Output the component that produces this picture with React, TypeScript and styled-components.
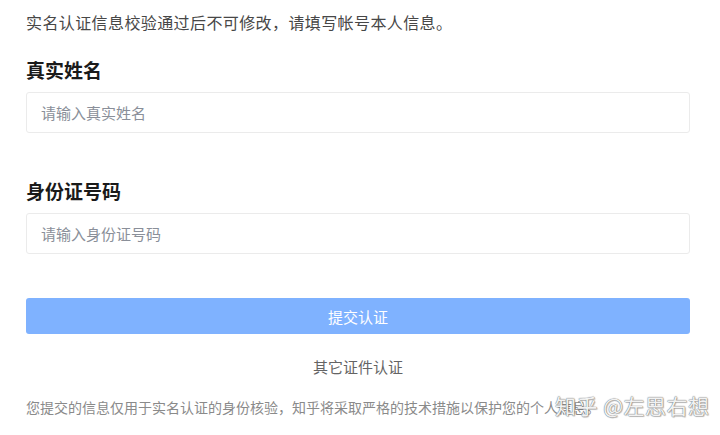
import React from "react";
import styled, { createGlobalStyle } from "styled-components";

const GlobalStyle = createGlobalStyle`
  html, body {
    margin: 0;
    padding: 0;
    background: #fff;
    font-family: "Noto Sans CJK SC", "Noto Sans", sans-serif;
  }
`;

const fields = [
  { label: "真实姓名", placeholder: "请输入真实姓名" },
  { label: "身份证号码", placeholder: "请输入身份证号码" },
];

const App: React.FC = () => {
  return (
    <>
      <GlobalStyle />
      <Page>
        <Notice>实名认证信息校验通过后不可修改，请填写帐号本人信息。</Notice>
        {fields.map((f, i) => (
          <Field key={i} isFirst={i === 0}>
            <Label>{f.label}</Label>
            <Input placeholder={f.placeholder} />
          </Field>
        ))}
        <SubmitButton>提交认证</SubmitButton>
        <OtherLink>其它证件认证</OtherLink>
        <Footer>
          您提交的信息仅用于实名认证的身份核验，知乎将采取严格的技术措施以保护您的个人信息。
          <Watermark>知乎 @左思右想</Watermark>
        </Footer>
      </Page>
    </>
  );
};

export default App;

const Page = styled.div`
  width: 720px;
  height: 435px;
  box-sizing: border-box;
  padding: 10px 30px 0 26px;
  position: relative;
  overflow: hidden;
`;

const Notice = styled.div`
  font-size: 16px;
  line-height: 24px;
  letter-spacing: 0.4px;
  color: #474747;
`;

const Field = styled.div<{ isFirst: boolean }>`
  margin-top: ${props => (props.isFirst ? "22px" : "44px")};
`;

const Label = styled.div`
  font-size: 19px;
  line-height: 28px;
  font-weight: 700;
  color: #1a1a1a;
  margin-bottom: 8px;
`;

const Input = styled.input`
  display: block;
  width: 100%;
  height: 41px;
  box-sizing: border-box;
  border: 1px solid #ebebeb;
  border-radius: 3px;
  padding: 0 14px;
  font-family: "Noto Sans CJK SC", sans-serif;
  font-size: 15px;
  color: #1a1a1a;
  outline: none;

  &::placeholder {
    color: #8a8f99;
  }
`;

const SubmitButton = styled.button`
  display: block;
  width: 100%;
  height: 36px;
  margin-top: 44px;
  border: none;
  border-radius: 3px;
  background: #7fb2ff;
  color: #fff;
  font-family: "Noto Sans CJK SC", sans-serif;
  font-size: 15px;
  cursor: default;
`;

const OtherLink = styled.div`
  margin-top: 22px;
  text-align: center;
  font-size: 15px;
  line-height: 22px;
  color: #646464;
`;

const Footer = styled.div`
  margin-top: 19px;
  font-size: 14px;
  line-height: 20px;
  color: #8a8a8a;
  white-space: nowrap;
  position: relative;
`;

const Watermark = styled.span`
  position: absolute;
  left: 529px;
  top: -6px;
  font-size: 21px;
  line-height: 28px;
  color: rgba(255, 255, 255, 0.92);
  text-shadow: 0 0 1px #777, 0 0 1px #777, 1px 1px 1px rgba(0, 0, 0, 0.25);
  letter-spacing: 0.5px;
`;
